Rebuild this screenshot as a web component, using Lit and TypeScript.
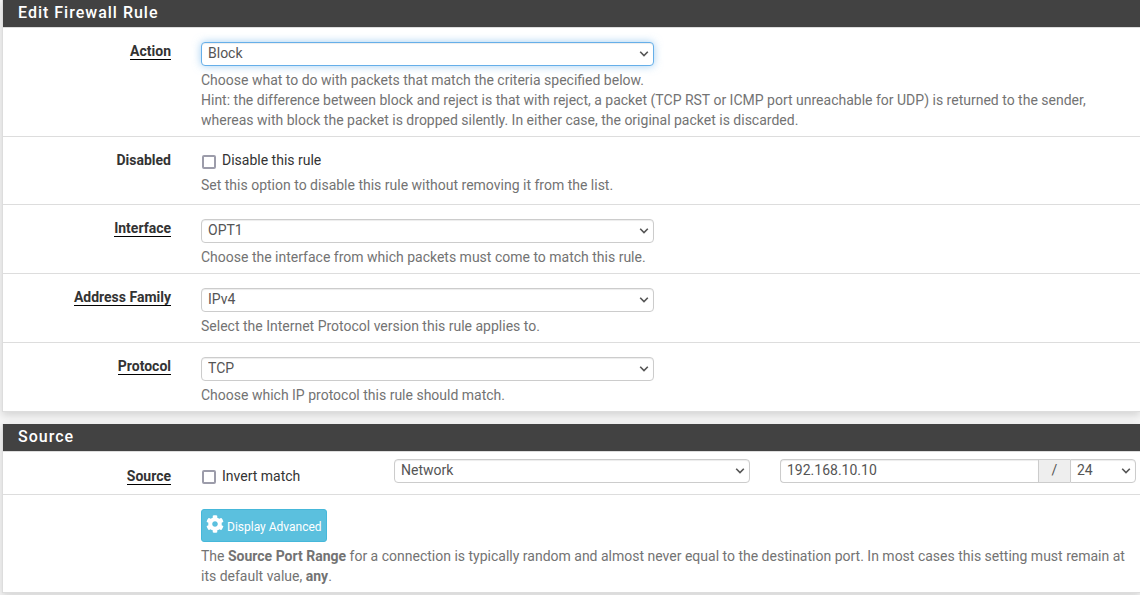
import { LitElement, html, css, nothing } from "lit";
import type { TemplateResult } from "lit";
import { customElement } from "lit/decorators.js";
import { classMap } from "lit/directives/class-map.js";

@customElement("app-root")
export class AppRoot extends LitElement {
  static styles = css`
    :host {
      display: block;
      min-height: 100vh;
      background: #f5f5f5;
      color: #333;
      font: 14px/20px Roboto, "Liberation Sans", sans-serif;
    }
    *,
    *::before,
    *::after {
      box-sizing: border-box;
    }
    .page {
      display: flex;
      flex-direction: column;
      gap: 12px;
      padding: 0 0 2px 2px;
      overflow: hidden;
    }
    .panel {
      background: #fff;
      border: 1px solid #ddd;
      border-width: 0 0 1px 1px;
      box-shadow: 0 3px 8px rgba(0, 0, 0, 0.14);
    }
    .title {
      margin: 0;
      padding: 3px 15px 4px;
      background: #424242;
      color: #fff;
      font-size: 16px;
      line-height: 20px;
      font-weight: 500;
      letter-spacing: 1px;
    }
    .row {
      display: grid;
      grid-template-columns: repeat(12, minmax(0, 1fr));
      column-gap: 30px;
      padding: 14px 4px 6px 5px;
      border-top: 1px solid #ddd;
    }
    .row.roomy {
      padding-bottom: 9px;
    }
    .roomy .help {
      margin-top: 5px;
    }
    .row.compact {
      padding-top: 7px;
      padding-bottom: 8px;
    }
    .name {
      grid-column: span 2;
      margin-top: -1px;
      text-align: right;
      font-weight: 700;
    }
    .compact .name,
    .compact .check {
      margin-top: 7px;
    }
    .required {
      border-bottom: 1px solid #000;
    }
    .half {
      grid-column: 3 / span 5;
    }
    .wide {
      grid-column: 3 / span 10;
    }
    .two {
      grid-column: span 2;
    }
    .four {
      grid-column: span 4;
    }
    .help {
      margin: 4px 0 0;
      grid-column: 3 / span 10;
      color: #737373;
    }
    .picker {
      display: grid;
      align-items: center;
    }
    .picker > * {
      grid-area: 1 / 1;
    }
    .chevron {
      justify-self: end;
      width: 10px;
      height: 6px;
      margin-right: 5px;
      fill: none;
      stroke: #555;
      stroke-width: 1.6;
      pointer-events: none;
    }
    .control {
      appearance: none;
      width: 100%;
      min-width: 0;
      height: 24px;
      margin: 0;
      padding: 0 6px 2px;
      border: 1px solid #ccc;
      border-radius: 4px;
      outline: none;
      background: #fff;
      color: #555;
      font: inherit;
      box-shadow: inset 0 1px 1px rgba(0, 0, 0, 0.075);
    }
    .control.active,
    .control:focus {
      border-color: #66afe9;
      box-shadow: inset 0 1px 1px rgba(0, 0, 0, 0.075), 0 0 8px rgba(102, 175, 233, 0.6);
    }
    .check {
      display: flex;
      align-items: center;
      gap: 6px;
      margin-top: -1px;
    }
    .tick {
      width: 14px;
      height: 14px;
      margin: 2px 0 0 1px;
      appearance: none;
      border: 2px solid #9c9caa;
      border-radius: 2px;
      background: #fff;
    }
    .roomy .tick {
      margin-top: 4px;
    }
    .tick:checked {
      border-color: #0060df;
      background: #0060df;
    }
    .group {
      display: grid;
      grid-template-columns: minmax(0, 1fr) 32px 66px;
      align-items: start;
    }
    .group .address {
      border-right: 0;
      border-radius: 4px 0 0 4px;
    }
    .addon {
      height: 24px;
      border: 1px solid #ccc;
      border-right: 0;
      background: #eee;
      color: #555;
      text-align: center;
    }
    .group .picker .control {
      border-radius: 0 4px 4px 0;
    }
    .button {
      display: inline-flex;
      align-items: center;
      gap: 3px;
      height: 33px;
      padding: 0 4px;
      border: 1px solid #46b8da;
      border-radius: 3px;
      background: #5bc0de;
      color: #fff;
      font: inherit;
      font-size: 12px;
      vertical-align: top;
      cursor: pointer;
    }
    .button span {
      padding-top: 2px;
    }
    .gear {
      width: 18px;
      height: 18px;
      margin-bottom: 3px;
      fill: currentColor;
    }
  `;

  private picker(id: string, options: string[], active = false, label?: string): TemplateResult {
    return html`<div class="picker">
      <select class=${classMap({ control: true, active })} id=${id} aria-label=${label ?? nothing}>
        ${options.map((o) => html`<option>${o}</option>`)}
      </select>
      <svg class="chevron" viewBox="0 0 10 6" aria-hidden="true"><path d="M1.2 .8 5 4.6 8.8 .8" /></svg>
    </div>`;
  }

  private selectRow(
    id: string,
    name: string,
    options: string[],
    help: TemplateResult | string,
    active = false
  ): TemplateResult {
    return html`<div class="row">
      <label class="name" for=${id}><span class="required">${name}</span></label>
      <div class="half">${this.picker(id, options, active)}</div>
      <p class="help">${help}</p>
    </div>`;
  }

  render() {
    return html`<main class="page">
      <section class="panel">
        <h2 class="title">Edit Firewall Rule</h2>
        ${this.selectRow(
          "action",
          "Action",
          ["Block", "Pass", "Reject"],
          html`Choose what to do with packets that match the criteria specified below.<br />Hint: the
            difference between block and reject is that with reject, a packet (TCP RST or ICMP port
            unreachable for UDP) is returned to the sender, whereas with block the packet is dropped
            silently. In either case, the original packet is discarded.`,
          true
        )}
        <div class="row roomy">
          <label class="name" for="disabled">Disabled</label>
          <label class="check wide"
            ><input class="tick" id="disabled" type="checkbox" /><span>Disable this rule</span></label
          >
          <p class="help">Set this option to disable this rule without removing it from the list.</p>
        </div>
        ${this.selectRow(
          "interface",
          "Interface",
          ["OPT1", "WAN", "LAN"],
          "Choose the interface from which packets must come to match this rule."
        )}
        ${this.selectRow(
          "family",
          "Address Family",
          ["IPv4", "IPv6", "IPv4+IPv6"],
          "Select the Internet Protocol version this rule applies to."
        )}
        ${this.selectRow(
          "protocol",
          "Protocol",
          ["TCP", "UDP", "TCP/UDP", "ICMP", "Any"],
          "Choose which IP protocol this rule should match."
        )}
      </section>

      <section class="panel">
        <h2 class="title">Source</h2>
        <div class="row compact">
          <label class="name" for="source"><span class="required">Source</span></label>
          <label class="check two"
            ><input class="tick" type="checkbox" /><span>Invert match</span></label
          >
          <div class="four">${this.picker("source", ["Network", "any", "Single host or alias"])}</div>
          <div class="four group">
            <input class="control address" type="text" .value=${"192.168.10.10"} aria-label="Source Address" />
            <span class="addon">/</span>
            ${this.picker("mask", ["24", "32", "16", "8"], false, "Mask")}
          </div>
        </div>
        <div class="row">
          <div class="wide">
            <button class="button" type="button">
              <svg class="gear" viewBox="0 0 512 512" aria-hidden="true">
                <path
                  d="M487.4 315.7l-42.6-24.6c4.3-23.2 4.3-47 0-70.2l42.6-24.6c4.9-2.8 7.1-8.6 5.5-14-11.1-35.6-30-67.8-54.7-94.6-3.8-4.1-10-5.1-14.8-2.3L380.8 110c-17.9-15.4-38.5-27.3-60.8-35.1V25.8c0-5.6-3.9-10.5-9.4-11.7-36.7-8.2-74.3-7.8-109.2 0-5.5 1.2-9.4 6.1-9.4 11.7V75c-22.2 7.9-42.8 19.8-60.8 35.1L88.7 85.5c-4.9-2.8-11-1.9-14.8 2.3-24.7 26.7-43.6 58.9-54.7 94.6-1.7 5.4.6 11.2 5.5 14L67.3 221c-4.3 23.2-4.3 47 0 70.2l-42.6 24.6c-4.9 2.8-7.1 8.6-5.5 14 11.1 35.6 30 67.8 54.7 94.6 3.8 4.1 10 5.1 14.8 2.3l42.6-24.6c17.9 15.4 38.5 27.3 60.8 35.1v49.2c0 5.6 3.9 10.5 9.4 11.7 36.7 8.2 74.3 7.8 109.2 0 5.5-1.2 9.4-6.1 9.4-11.7v-49.2c22.2-7.9 42.8-19.8 60.8-35.1l42.6 24.6c4.9 2.8 11 1.9 14.8-2.3 24.7-26.7 43.6-58.9 54.7-94.6 1.5-5.5-.7-11.3-5.6-14.1zM256 336c-44.1 0-80-35.9-80-80s35.9-80 80-80 80 35.9 80 80-35.9 80-80 80z"
                />
              </svg>
              <span>Display Advanced</span>
            </button>
          </div>
          <p class="help">
            The <b>Source Port Range</b> for a connection is typically random and almost never equal to
            the destination port. In most cases this setting must remain at its default value,
            <b>any</b>.
          </p>
        </div>
      </section>
    </main>`;
  }
}
